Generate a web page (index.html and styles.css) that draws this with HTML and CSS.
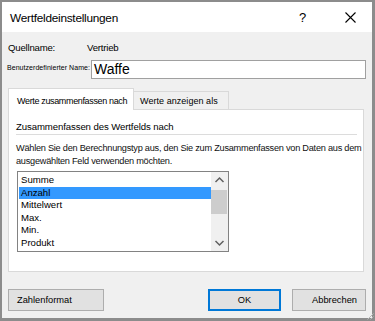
FILE: index.html
```html
<!DOCTYPE html>
<html lang="de">
<head>
  <meta charset="UTF-8" />
  <title>Wertfeldeinstellungen</title>
  <link rel="stylesheet" href="styles.css">
</head>
<body>
  <div class="dialog">
    <div class="titlebar">
      <span class="title">Wertfeldeinstellungen</span>
      <span class="help">?</span>
      <svg class="close" width="11" height="11" viewBox="0 0 11 11">
        <path d="M0.5 0.5 L10.5 10.5 M10.5 0.5 L0.5 10.5" stroke="#000" stroke-width="1.1" fill="none" />
      </svg>
    </div>

    <div class="body">
      <div class="source-row">
        <span class="source-label">Quellname:</span>
        <span class="source-value">Vertrieb</span>
      </div>

      <div class="name-row">
        <span class="name-label">Benutzerdefinierter Name:</span>
        <div class="name-input">Waffe</div>
      </div>

      <div class="tabs">
        <div class="tab active">Werte zusammenfassen nach</div>
        <div class="tab">Werte anzeigen als</div>
      </div>

      <div class="panel">
        <div class="group-head">Zusammenfassen des Wertfelds nach</div>
        <p class="desc">Wählen Sie den Berechnungstyp aus, den Sie zum Zusammenfassen von Daten aus dem<br>ausgewählten Feld verwenden möchten.</p>

        <div class="listbox">
          <ul class="items">
            <li>Summe</li>
            <li class="selected">Anzahl</li>
            <li>Mittelwert</li>
            <li>Max.</li>
            <li>Min.</li>
            <li>Produkt</li>
          </ul>
          <div class="scrollbar">
            <svg class="arrow" width="17" height="17" viewBox="0 0 17 17">
              <path d="M4.5 10 L8.5 6 L12.5 10" stroke="#606060" stroke-width="1.5" fill="none" />
            </svg>
            <div class="track">
              <div class="thumb"></div>
            </div>
            <svg class="arrow" width="17" height="17" viewBox="0 0 17 17">
              <path d="M4.5 7 L8.5 11 L12.5 7" stroke="#606060" stroke-width="1.5" fill="none" />
            </svg>
          </div>
        </div>
      </div>

      <div class="buttons">
        <button class="btn btn-format">Zahlenformat</button>
        <button class="btn btn-ok">OK</button>
        <button class="btn btn-cancel">Abbrechen</button>
      </div>
    </div>

    <!-- size grip -->
    <svg class="grip" width="8" height="8" viewBox="0 0 8 8">
      <path d="M7.5 1.5 L1.5 7.5 M7.5 4.5 L4.5 7.5" stroke="#b8b8b8" stroke-width="1" fill="none" />
    </svg>
  </div>
</body>
</html>
```

FILE: styles.css
```css
* {
  box-sizing: border-box;
}

html, body {
  margin: 0;
  padding: 0;
  background: #f0f0f0;
  font-family: "Liberation Sans", Arial, sans-serif;
  color: #000;
}

.dialog {
  position: relative;
  width: 375px;
  height: 321px;
  border-style: solid;
  border-color: #8c8c8c;
  border-width: 2px 3px 3px 2px;
  display: flex;
  flex-direction: column;
  background: #f0f0f0;
}

/* TITLE BAR */
.titlebar {
  height: 30px;
  flex: none;
  background: #fff;
  display: flex;
  align-items: center;
  padding: 0 0 0 8px;
}
.title {
  font-size: 11.8px;
  letter-spacing: -0.25px;
  flex: 1;
  margin-top: 2px;
}
.help {
  font-size: 13px;
  width: 14px;
  margin-right: 32px;
  margin-top: 1px;
}
.close {
  margin-right: 16px;
  margin-top: 1px;
}

/* BODY */
.body {
  flex: 1;
  padding: 8px 6px 0 6px;
  display: flex;
  flex-direction: column;
}

.source-row {
  display: flex;
  height: 14px;
  align-items: center;
  font-size: 9.6px;
  letter-spacing: -0.2px;
}
.source-label {
  width: 79px;
}

.name-row {
  display: flex;
  margin-top: 6px;
  height: 19px;
}
.name-label {
  font-size: 7px;
  letter-spacing: 0.05px;
  margin-left: -1px;
  margin-top: 3px;
  line-height: 9px;
  white-space: nowrap;
  width: 84px;
}
.name-input {
  flex: 1;
  background: #fff;
  border: 1px solid #a0a0a0;
  font-size: 14px;
  line-height: 17px;
  padding-left: 2px;
}

/* TABS */
.tabs {
  display: flex;
  align-items: flex-end;
  margin-top: 9px;
  height: 22px;
  margin-bottom: -1px;
  position: relative;
  z-index: 1;
}
.tab {
  font-size: 9px;
  letter-spacing: 0.05px;
  white-space: nowrap;
  border: 1px solid #d9d9d9;
  border-bottom: none;
  background: #f0f0f0;
  height: 18px;
  margin-bottom: 1px;
  border-left: none;
  padding: 4px 0 0 6px;
  width: 95px;
}
.tab.active {
  background: #fff;
  border-left: 1px solid #d9d9d9;
  height: 22px;
  margin-bottom: 0;
  width: 126px;
  padding: 7px 0 0 8px;
  letter-spacing: -0.35px;
}

/* PANEL */
.panel {
  height: 163px;
  margin-right: 2px;
  background: #fff;
  border: 1px solid #d9d9d9;
  padding: 10px 6px 0 7px;
}
.group-head {
  font-size: 9.6px;
  letter-spacing: -0.1px;
  line-height: 14px;
  border-bottom: 1px solid #dcdcdc;
  height: 15px;
}
.desc {
  margin: 7px -4px 0 0;
  font-size: 9.2px;
  letter-spacing: -0.25px;
  line-height: 13px;
  white-space: nowrap;
  color: #111;
}

/* LISTBOX */
.listbox {
  margin: 3px 0 0 1px;
  width: 212px;
  height: 81px;
  border: 1px solid #828282;
  display: flex;
  background: #fff;
}
.items {
  list-style: none;
  margin: 0;
  padding: 2px 0 0 1px;
  flex: 1;
}
.items li {
  height: 12.5px;
  line-height: 12.5px;
  font-size: 9.6px;
  padding-left: 2px;
}
.items li.selected {
  background: #3399ff;
}
.scrollbar {
  width: 17px;
  background: #f0f0f0;
  display: flex;
  flex-direction: column;
}
.arrow {
  flex: none;
  display: block;
}
.track {
  flex: 1;
}
.thumb {
  margin: 1px 1px 0 0;
  height: 24px;
  background: #cdcdcd;
}

/* BUTTONS */
.buttons {
  display: flex;
  margin-top: 17px;
  height: 22px;
}
.btn {
  font-family: "Liberation Sans", Arial, sans-serif;
  font-size: 9.3px;
  color: #000;
  background: #e1e1e1;
  border: 1px solid #adadad;
  height: 22px;
  padding: 0;
  margin: 0;
}
.btn-format {
  width: 96px;
  text-align: left;
  padding-left: 8px;
}
.btn-ok {
  width: 73px;
  margin-left: auto;
  border: 2px solid #0078d7;
}
.btn-cancel {
  width: 74px;
  margin-left: 11px;
  padding-left: 11px;
}

.grip {
  position: absolute;
  right: -2px;
  bottom: -2px;
}
```
